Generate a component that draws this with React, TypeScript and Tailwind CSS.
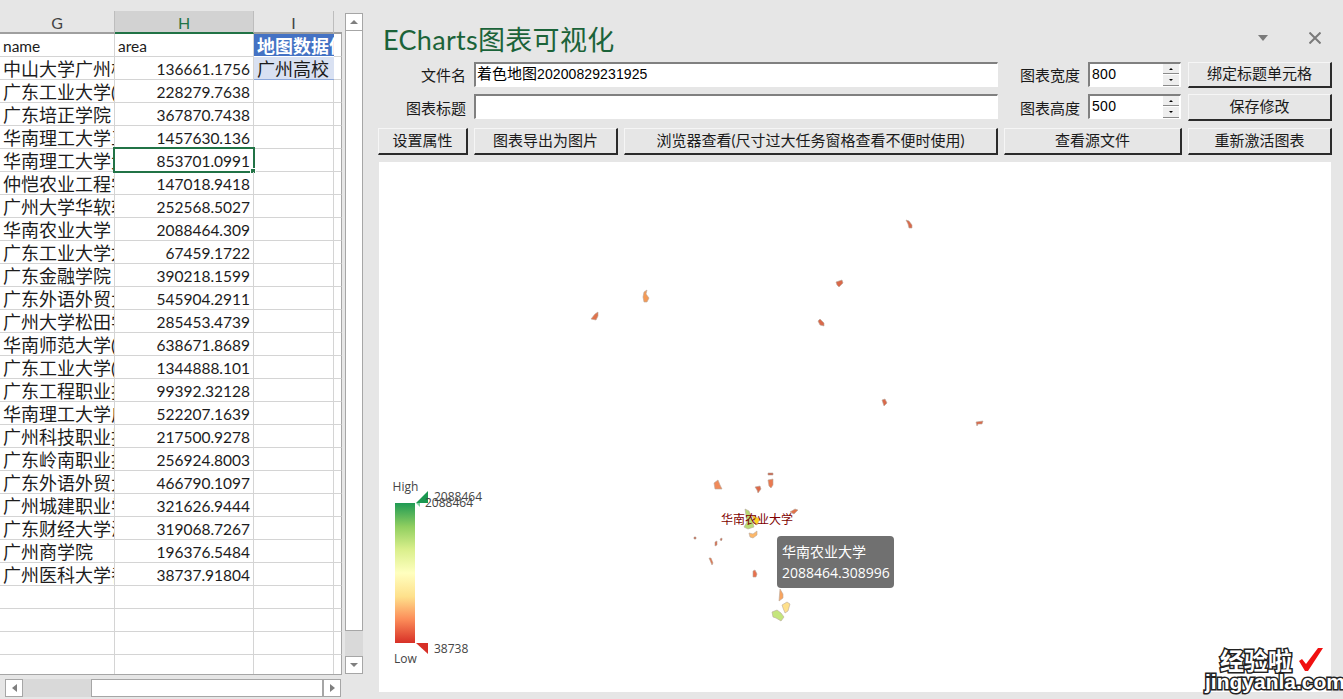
import type { ReactNode } from "react";

const rows: [string, string][] = [
  ["中山大学广州校", "136661.1756"],
  ["广东工业大学(", "228279.7638"],
  ["广东培正学院", "367870.7438"],
  ["华南理工大学五", "1457630.136"],
  ["华南理工大学大", "853701.0991"],
  ["仲恺农业工程学", "147018.9418"],
  ["广州大学华软软", "252568.5027"],
  ["华南农业大学", "2088464.309"],
  ["广东工业大学龙", "67459.1722"],
  ["广东金融学院", "390218.1599"],
  ["广东外语外贸大", "545904.2911"],
  ["广州大学松田学", "285453.4739"],
  ["华南师范大学(", "638671.8689"],
  ["广东工业大学(", "1344888.101"],
  ["广东工程职业技", "99392.32128"],
  ["华南理工大学广", "522207.1639"],
  ["广州科技职业技", "217500.9278"],
  ["广东岭南职业技", "256924.8003"],
  ["广东外语外贸大", "466790.1097"],
  ["广州城建职业学", "321626.9444"],
  ["广东财经大学海", "319068.7267"],
  ["广州商学院", "196376.5484"],
  ["广州医科大学番", "38737.91804"],
];

// Map pieces in page coordinates, traced from the chart
const regions: [string, string][] = [
  ["906,220 909,221 912,225 912,228 909,228 908,224", "#d9694a"],
  ["836,282 842,280 843,283 839,287 837,285", "#d9694a"],
  ["644,292 647,290 646,294 649,298 647,302 644,302 643,297", "#f49a56"],
  ["591,319 595,314 598,312 598,316 596,320", "#e0734c"],
  ["818,321 820,319 824,323 824,326 820,325", "#d9694a"],
  ["882,400 885,399 887,403 884,406", "#d9694a"],
  ["976,422 983,421 982,424 978,424 977,426", "#d9694a"],
  ["714,483 718,480 720,485 722,489 715,489", "#f08a5a"],
  ["755,487 760,486 761,489 758,493 757,490", "#dd6a4a"],
  ["768,473 773,473 773,475 768,475", "#c9604a"],
  ["768,480 773,479 773,485 771,488 769,486", "#ea7a50"],
  ["790,512 795,509 798,510 794,514", "#e0734c"],
  ["745,509 749,511 752,519 754,527 748,529 744,527 747,522", "#b8dc74"],
  ["752,515 760,519 757,525 755,524", "#ffd21e"],
  ["749,533 753,534 757,531 757,535 753,538 750,537", "#fdb768"],
  ["694,537 696,537 696,539 694,539", "#c9604a"],
  ["715,542 717,541 717,545 715,546", "#d9694a"],
  ["720,539 722,538 722,540 721,541", "#c9604a"],
  ["709,558 711,558 713,563 712,565", "#e0734c"],
  ["753,571 755,570 757,574 756,577 753,577", "#e8704c"],
  ["780,589 783,594 783,598 779,601", "#f9a45e"],
  ["782,605 787,602 790,604 788,611 785,613 783,608", "#fee08b"],
  ["772,612 777,610 781,613 784,617 781,621 776,618 773,617", "#c4e57c"],
];

const cell = "h-[23px] border-b border-r border-[#d4d4d4] overflow-hidden whitespace-nowrap pt-[2px] leading-[21px]";
const header = "h-[23px] border-b-2 border-r border-r-[#bdbdbd] text-center text-[16px] leading-[24px]";

function Sheet() {
  return (
    <div className="grid h-[664px] w-[342px] grid-cols-[115px_139px_80px_8px] auto-rows-[23px] overflow-hidden border-b border-[#a6a6a6] bg-white text-[15.5px] text-[#1c1c1c]">
      {/* column headers */}
      <div className={`${header} border-b-[#9f9f9f] bg-[#e6e6e6] text-[#444]`}>G</div>
      <div className={`${header} border-b-[#217346] bg-[#d2d2d2] text-[#217346]`}>H</div>
      <div className={`${header} border-b-[#9f9f9f] bg-[#e6e6e6] text-[#444]`}>I</div>
      <div className="h-[23px] border-b-2 border-b-[#9f9f9f] bg-[#e6e6e6]" />

      {/* first row */}
      <div className={`${cell} pl-[3px]`}>name</div>
      <div className={`${cell} pl-[3px]`}>area</div>
      <div className="h-[23px] overflow-hidden whitespace-nowrap border-b border-white bg-[#4472c4] pl-[3px] pt-[1px] text-[18px] font-bold leading-[22px] text-white">地图数据信</div>
      <div className="h-[23px] border-b border-r border-[#d4d4d4] border-r-[#a6a6a6]" />

      {rows.map(([name, area], i) => (
        <Row key={area} name={name} area={area} index={i} />
      ))}

      {[0, 1, 2, 3].map((i) => (
        <Row key={i} name="" area="" index={i + 100} />
      ))}
    </div>
  );
}

function Row({ name, area, index }: { name: string; area: string; index: number }) {
  return (
    <>
      <div className={`${cell} pl-[3px] text-[18px]`}>{name}</div>
      <div className={`${cell} relative overflow-visible pr-[3px] text-right`}>
        {area}
        {index === 4 && (
          <div className="absolute -left-[2px] -top-[2px] h-[26px] w-[142px] border-2 border-[#217346]">
            <div className="absolute -bottom-[3px] -right-[3px] h-[6px] w-[6px] border border-white bg-[#217346]" />
          </div>
        )}
      </div>
      {index === 0 ? (
        <div className="h-[23px] overflow-hidden whitespace-nowrap border-b border-[#8ea9db] bg-[#d9e1f2] pl-[3px] pt-[1px] text-[18px] leading-[22px]">广州高校</div>
      ) : (
        <div className={cell} />
      )}
      <div className="h-[23px] border-b border-r border-[#d4d4d4] border-r-[#a6a6a6]" />
    </>
  );
}

function ScrollButton({ children }: { children: ReactNode }) {
  return (
    <div className="flex h-[18px] w-[18px] shrink-0 items-center justify-center border border-[#a6a6a6] bg-white">{children}</div>
  );
}

const Tri = {
  up: <div className="h-0 w-0 border-x-[4px] border-b-[4px] border-x-transparent border-b-[#7f7f7f]" />,
  down: <div className="h-0 w-0 border-x-[4px] border-t-[4px] border-x-transparent border-t-[#7f7f7f]" />,
  left: <div className="h-0 w-0 border-y-[4px] border-r-[5px] border-y-transparent border-r-[#7f7f7f]" />,
  right: <div className="h-0 w-0 border-y-[4px] border-l-[5px] border-y-transparent border-l-[#7f7f7f]" />,
};

function Button({ children, className }: { children: ReactNode; className: string }) {
  return (
    <button
      type="button"
      className={`${className} flex items-center justify-center border-b-2 border-l border-r-2 border-t border-b-[#2b2b2b] border-l-[#f6f6f6] border-r-[#2b2b2b] border-t-[#f6f6f6] bg-[#e6e6e6] pb-[2px] text-[15px] text-[#1a1a1a]`}
    >
      {children}
    </button>
  );
}

function Field({ value, className }: { value?: ReactNode; className: string }) {
  return (
    <div className={`${className} h-[25px] overflow-hidden border-b border-l-2 border-r border-t-2 border-b-white border-l-[#808080] border-r-white border-t-[#808080] bg-white pl-[1px] text-[15px] leading-[18px] text-black`}>
      {value}
    </div>
  );
}

function Spin({ value }: { value: string }) {
  return (
    <div className="relative h-[25px] w-[93px] border-b border-l-2 border-r border-t-2 border-b-white border-l-[#808080] border-r-white border-t-[#808080] bg-white pl-[2px] font-['Liberation_Sans',sans-serif] text-[14px] leading-[20px] tracking-[0.3px] text-black">
      {value}
      <div className="absolute right-[1px] top-0 flex h-[22px] w-[16px] flex-col gap-[1px]">
        <div className="flex h-[10px] items-center justify-center border-b border-[#8a8a8a] bg-[#eeeeee]">
          <div className="h-0 w-0 border-x-[2px] border-b-[2px] border-x-transparent border-b-black" />
        </div>
        <div className="flex h-[11px] items-center justify-center border-b border-[#8a8a8a] bg-[#eeeeee]">
          <div className="h-0 w-0 border-x-[2px] border-t-[2px] border-x-transparent border-t-black" />
        </div>
      </div>
    </div>
  );
}

function Chart() {
  return (
    <div className="relative mx-px h-[530px] bg-white">
      <svg className="h-full w-full overflow-visible" viewBox="379 162 952 530">
        <defs>
          <linearGradient id="legend" x1="0" y1="0" x2="0" y2="1">
            <stop offset="0" stopColor="#1f9a54" />
            <stop offset="0.17" stopColor="#91cf60" />
            <stop offset="0.33" stopColor="#d9ef8b" />
            <stop offset="0.5" stopColor="#ffffbf" />
            <stop offset="0.67" stopColor="#fee08b" />
            <stop offset="0.83" stopColor="#fc8d59" />
            <stop offset="1" stopColor="#d73027" />
          </linearGradient>
        </defs>

        {regions.map(([points, fill]) => (
          <polygon key={points} points={points} fill={fill} stroke="#b9a89c" strokeWidth="0.6" />
        ))}
        <text x="757" y="524" textAnchor="middle" fontSize="12" fill="#800000">华南农业大学</text>

        {/* legend */}
        <rect x="395" y="503" width="20" height="140" fill="url(#legend)" />
        <polygon points="416,503 428,491 428,503" fill="#1a9850" />
        <polygon points="416,503 420,503 420,507" fill="#7fd3a2" />
        <polygon points="416,643 428,643 428,654" fill="#d73027" />
        <g fontSize="12" fill="#444" className="font-['Open_Sans',sans-serif]">
          <text x="405.5" y="491" textAnchor="middle">High</text>
          <text x="405.5" y="663" textAnchor="middle">Low</text>
          <text x="434" y="501">2088464</text>
          <text x="425" y="507">2088464</text>
          <text x="434" y="653">38738</text>
        </g>

        {/* watermark */}
        <g fill="#fff" stroke="#222" strokeWidth="3" fontWeight="700" className="[paint-order:stroke]">
          <text x="1220" y="670" fontSize="24">经验啦</text>
          <text x="1205" y="689" fontSize="21" className="font-['Liberation_Sans',sans-serif]">jingyanla.com</text>
        </g>
        <polygon points="1299,661 1302,659 1306,664 1318,648 1323,648 1308,671 1305,671" fill="#f01010" />
      </svg>

      <div className="absolute left-[398px] top-[374px] h-[52px] w-[117px] rounded-[4px] bg-[#707070] p-[5px] text-[14px] leading-[21px] text-white">
        <div>华南农业大学</div>
        <div className="font-['Open_Sans',sans-serif]">2088464.308996</div>
      </div>
    </div>
  );
}

export default function App() {
  return (
    <div className="flex h-[699px] w-[1343px] overflow-hidden bg-[#e6e6e6] font-['Lato','Noto_Sans_CJK_SC',sans-serif]">
      {/* worksheet */}
      <section className="flex w-[368px] shrink-0 flex-col pt-[11px]">
        <div className="flex">
          <Sheet />
          <div className="ml-[3px] mt-[2px] flex h-[661px] w-[18px] flex-col">
            <ScrollButton>{Tri.up}</ScrollButton>
            <div className="h-[600px] border-x border-b border-[#a6a6a6] bg-white" />
            <div className="flex-1 bg-[#d9d9d9]" />
            <ScrollButton>{Tri.down}</ScrollButton>
          </div>
        </div>
        <div className="ml-[5px] mt-[4px] flex h-[18px] w-[336px]">
          <ScrollButton>{Tri.left}</ScrollButton>
          <div className="w-[68px] bg-[#d9d9d9]" />
          <div className="flex-1 border border-[#a6a6a6] bg-white" />
          <ScrollButton>{Tri.right}</ScrollButton>
        </div>
      </section>

      {/* task pane */}
      <section className="flex flex-1 flex-col pl-[10px] pr-[11px]">
        <div className="flex h-[62px] shrink-0 items-start justify-between">
          <h1 className="ml-[5px] mt-[22px] text-[27px] font-normal leading-[36px] tracking-[0.3px] text-[#1b6339]">ECharts图表可视化</h1>
          <div className="mr-[11px] mt-[32px] flex items-center gap-[41px]">
            <div className="h-0 w-0 border-x-[5px] border-t-[6px] border-x-transparent border-t-[#7a7a7a]" />
            <svg width="12" height="12" viewBox="0 0 12 12" stroke="#7a7a7a" strokeWidth="2">
              <path d="M0.5 0.5 L11.5 11.5 M11.5 0.5 L0.5 11.5" />
            </svg>
          </div>
        </div>

        <div className="flex h-[32px] shrink-0 items-start">
          <div className="w-[88px] pt-[2px] text-right text-[15px] text-[#1a1a1a]">文件名</div>
          <Field
            className="ml-[8px] w-[524px]"
            value={
              <>
                着色地图<span className="font-['Liberation_Sans',sans-serif] text-[14px] tracking-[0.1px]">20200829231925</span>
              </>
            }
          />
          <div className="ml-[22px] w-[60px] pt-[2px] text-[15px] text-[#1a1a1a]">图表宽度</div>
          <div className="ml-[8px]"><Spin value="800" /></div>
          <Button className="ml-[7px] h-[26px] w-[144px]">绑定标题单元格</Button>
        </div>

        <div className="flex h-[34px] shrink-0 items-start">
          <div className="w-[88px] pt-[3px] text-right text-[15px] text-[#1a1a1a]">图表标题</div>
          <Field className="ml-[8px] w-[524px]" />
          <div className="ml-[22px] w-[60px] pt-[3px] text-[15px] text-[#1a1a1a]">图表高度</div>
          <div className="ml-[8px]"><Spin value="500" /></div>
          <Button className="ml-[7px] h-[27px] w-[144px]">保存修改</Button>
        </div>

        <div className="mb-[7px] flex h-[27px] shrink-0 gap-[6px]">
          <Button className="w-[90px]">设置属性</Button>
          <Button className="w-[144px]">图表导出为图片</Button>
          <Button className="w-[374px]">浏览器查看(尺寸过大任务窗格查看不便时使用)</Button>
          <Button className="w-[178px]">查看源文件</Button>
          <Button className="w-[144px]">重新激活图表</Button>
        </div>

        <Chart />
      </section>
    </div>
  );
}
